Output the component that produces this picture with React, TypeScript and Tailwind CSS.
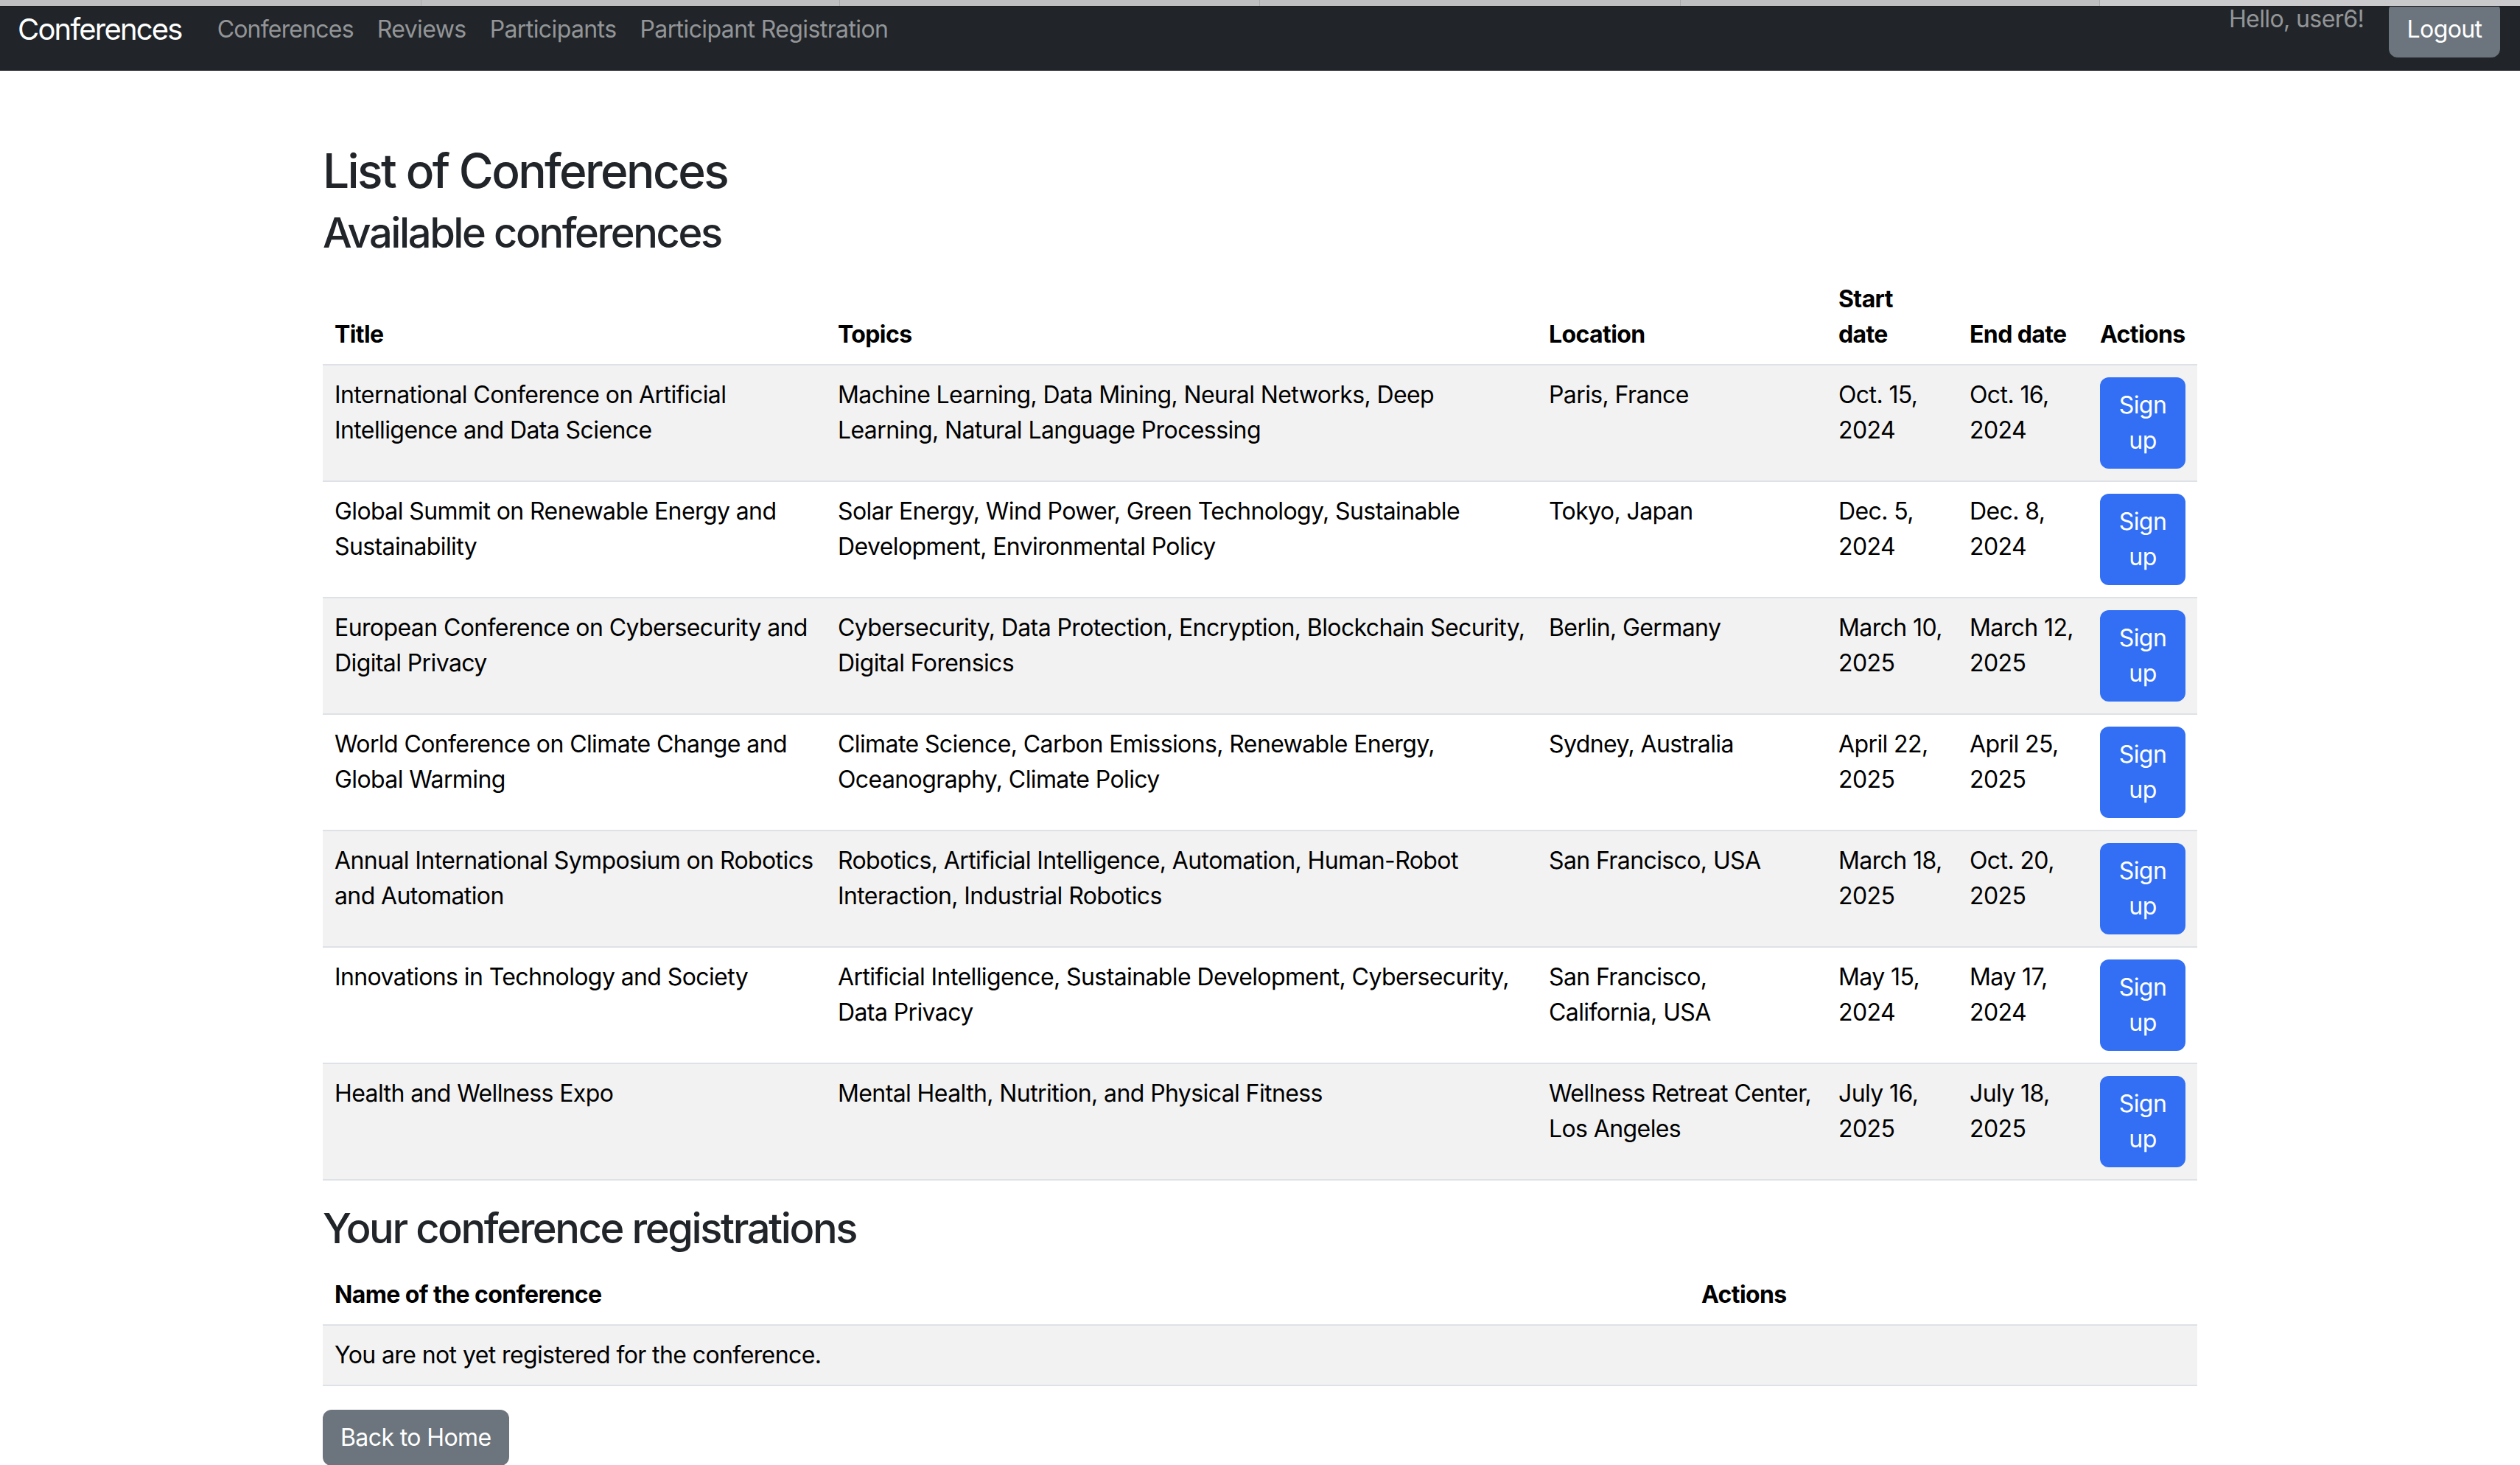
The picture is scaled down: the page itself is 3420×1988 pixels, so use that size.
import React from "react";

type Row = {
  title: string[];
  topics: string[];
  location: string[];
  start: string[];
  end: string[];
};

const rows: Row[] = [
  {
    title: ["International Conference on Artificial", "Intelligence and Data Science"],
    topics: ["Machine Learning, Data Mining, Neural Networks, Deep", "Learning, Natural Language Processing"],
    location: ["Paris, France"],
    start: ["Oct. 15,", "2024"],
    end: ["Oct. 16,", "2024"],
  },
  {
    title: ["Global Summit on Renewable Energy and", "Sustainability"],
    topics: ["Solar Energy, Wind Power, Green Technology, Sustainable", "Development, Environmental Policy"],
    location: ["Tokyo, Japan"],
    start: ["Dec. 5,", "2024"],
    end: ["Dec. 8,", "2024"],
  },
  {
    title: ["European Conference on Cybersecurity and", "Digital Privacy"],
    topics: ["Cybersecurity, Data Protection, Encryption, Blockchain Security,", "Digital Forensics"],
    location: ["Berlin, Germany"],
    start: ["March 10,", "2025"],
    end: ["March 12,", "2025"],
  },
  {
    title: ["World Conference on Climate Change and", "Global Warming"],
    topics: ["Climate Science, Carbon Emissions, Renewable Energy,", "Oceanography, Climate Policy"],
    location: ["Sydney, Australia"],
    start: ["April 22,", "2025"],
    end: ["April 25,", "2025"],
  },
  {
    title: ["Annual International Symposium on Robotics", "and Automation"],
    topics: ["Robotics, Artificial Intelligence, Automation, Human-Robot", "Interaction, Industrial Robotics"],
    location: ["San Francisco, USA"],
    start: ["March 18,", "2025"],
    end: ["Oct. 20,", "2025"],
  },
  {
    title: ["Innovations in Technology and Society"],
    topics: ["Artificial Intelligence, Sustainable Development, Cybersecurity,", "Data Privacy"],
    location: ["San Francisco,", "California, USA"],
    start: ["May 15,", "2024"],
    end: ["May 17,", "2024"],
  },
  {
    title: ["Health and Wellness Expo"],
    topics: ["Mental Health, Nutrition, and Physical Fitness"],
    location: ["Wellness Retreat Center,", "Los Angeles"],
    start: ["July 16,", "2025"],
    end: ["July 18,", "2025"],
  },
];

function Lines({ lines }: { lines: string[] }) {
  return (
    <>
      {lines.map((l, i) => (
        <span key={i} className="block whitespace-nowrap">
          {l}
        </span>
      ))}
    </>
  );
}

export default function App() {
  const font = { fontFamily: "Inter, 'Noto Sans', 'Liberation Sans', sans-serif" };
  return (
    <div className="relative min-h-[1988px] bg-white text-[32px] leading-[48px] text-[#212529] tracking-[-0.6px]" style={font}>
      {/* browser tab strip overlay */}
      <div className="absolute left-0 right-0 top-0 z-10 flex h-[9px] border-b border-[#1b1b1b] bg-[#bfbfc1]">
        <div className="w-[572px] border-r border-[#a9a9ab]" />
        <div className="w-[568px] border-r border-[#a9a9ab]" />
        <div className="w-[570px] border-r border-[#a9a9ab]" />
        <div className="w-[571px] border-r border-[#a9a9ab]" />
        <div className="w-[569px] border-r border-[#a9a9ab]" />
        <div className="flex-1 bg-[#cacacc]" />
      </div>

      {/* navbar */}
      <nav className="h-[96px] bg-[#212529]">
        <div className="flex h-[80px] items-center pl-[24px] pr-[27px]">
          <span className="mr-[32px] text-[40px] leading-[60px] tracking-[-1.8px] text-white">Conferences</span>
          <div className="flex items-center text-[#939598]">
            <span className="px-[16px] tracking-[-0.8px]">Conferences</span>
            <span className="px-[16px]">Reviews</span>
            <span className="px-[16px]">Participants</span>
            <span className="px-[16px]">Participant Registration</span>
          </div>
          <div className="flex-1" />
          <span className="mr-[34px] self-start mt-[2px] text-[#939598]">Hello, user6!</span>
          <span className="flex h-[76px] w-[151px] items-center justify-center rounded-[12px] bg-[#6c757d] text-white">
            Logout
          </span>
        </div>
      </nav>

      {/* main */}
      <main className="mx-auto mt-[97px] w-[2544px]">
        <h2 className="mb-[13px] text-[64px] font-medium leading-[77px] tracking-[-2.6px] text-[#212529]">List of Conferences</h2>
        <h3 className="mb-[16px] text-[56px] font-medium leading-[67px] tracking-[-2.4px] text-[#212529]">Available conferences</h3>

        <table className="mb-[32px] w-full table-fixed border-collapse text-black">
          <colgroup>
            <col className="w-[683px]" />
            <col className="w-[965px]" />
            <col className="w-[393px]" />
            <col className="w-[178px]" />
            <col className="w-[177px]" />
            <col className="w-[148px]" />
          </colgroup>
          <thead>
            <tr className="border-b-2 border-[#dee2e6] text-left align-bottom font-bold">
              <th className="p-[16px]">Title</th>
              <th className="p-[16px]">Topics</th>
              <th className="p-[16px]">Location</th>
              <th className="p-[16px]">
                <span className="block">Start</span>
                <span className="block">date</span>
              </th>
              <th className="p-[16px] whitespace-nowrap">End date</th>
              <th className="p-[16px]">Actions</th>
            </tr>
          </thead>
          <tbody>
            {rows.map((r, i) => (
              <tr
                key={i}
                className={`border-b-2 border-[#dee2e6] align-top ${i % 2 === 0 ? "bg-[#f2f2f2]" : "bg-white"}`}
              >
                <td className="p-[16px]"><Lines lines={r.title} /></td>
                <td className="p-[16px]"><Lines lines={r.topics} /></td>
                <td className="p-[16px]"><Lines lines={r.location} /></td>
                <td className="p-[16px]"><Lines lines={r.start} /></td>
                <td className="p-[16px]"><Lines lines={r.end} /></td>
                <td className="p-[16px]">
                  <span className="block w-[116px] rounded-[12px] bg-[#326ff4] py-[14px] text-center text-white">
                    Sign
                    <br />
                    up
                  </span>
                </td>
              </tr>
            ))}
          </tbody>
        </table>

        <h3 className="mb-[16px] text-[56px] font-medium leading-[67px] tracking-[-2.4px] text-[#212529]">Your conference registrations</h3>

        <table className="mb-[32px] w-full table-fixed border-collapse text-black">
          <colgroup>
            <col className="w-[1855px]" />
            <col />
          </colgroup>
          <thead>
            <tr className="border-b-2 border-[#dee2e6] text-left align-bottom font-bold">
              <th className="p-[16px]">Name of the conference</th>
              <th className="p-[16px]">Actions</th>
            </tr>
          </thead>
          <tbody>
            <tr className="border-b-2 border-[#dee2e6] bg-[#f2f2f2] align-top">
              <td className="p-[16px]" colSpan={2}>You are not yet registered for the conference.</td>
            </tr>
          </tbody>
        </table>

        <span className="inline-block rounded-[12px] bg-[#6c757d] px-[24px] py-[14px] text-white">Back to Home</span>
      </main>
    </div>
  );
}
